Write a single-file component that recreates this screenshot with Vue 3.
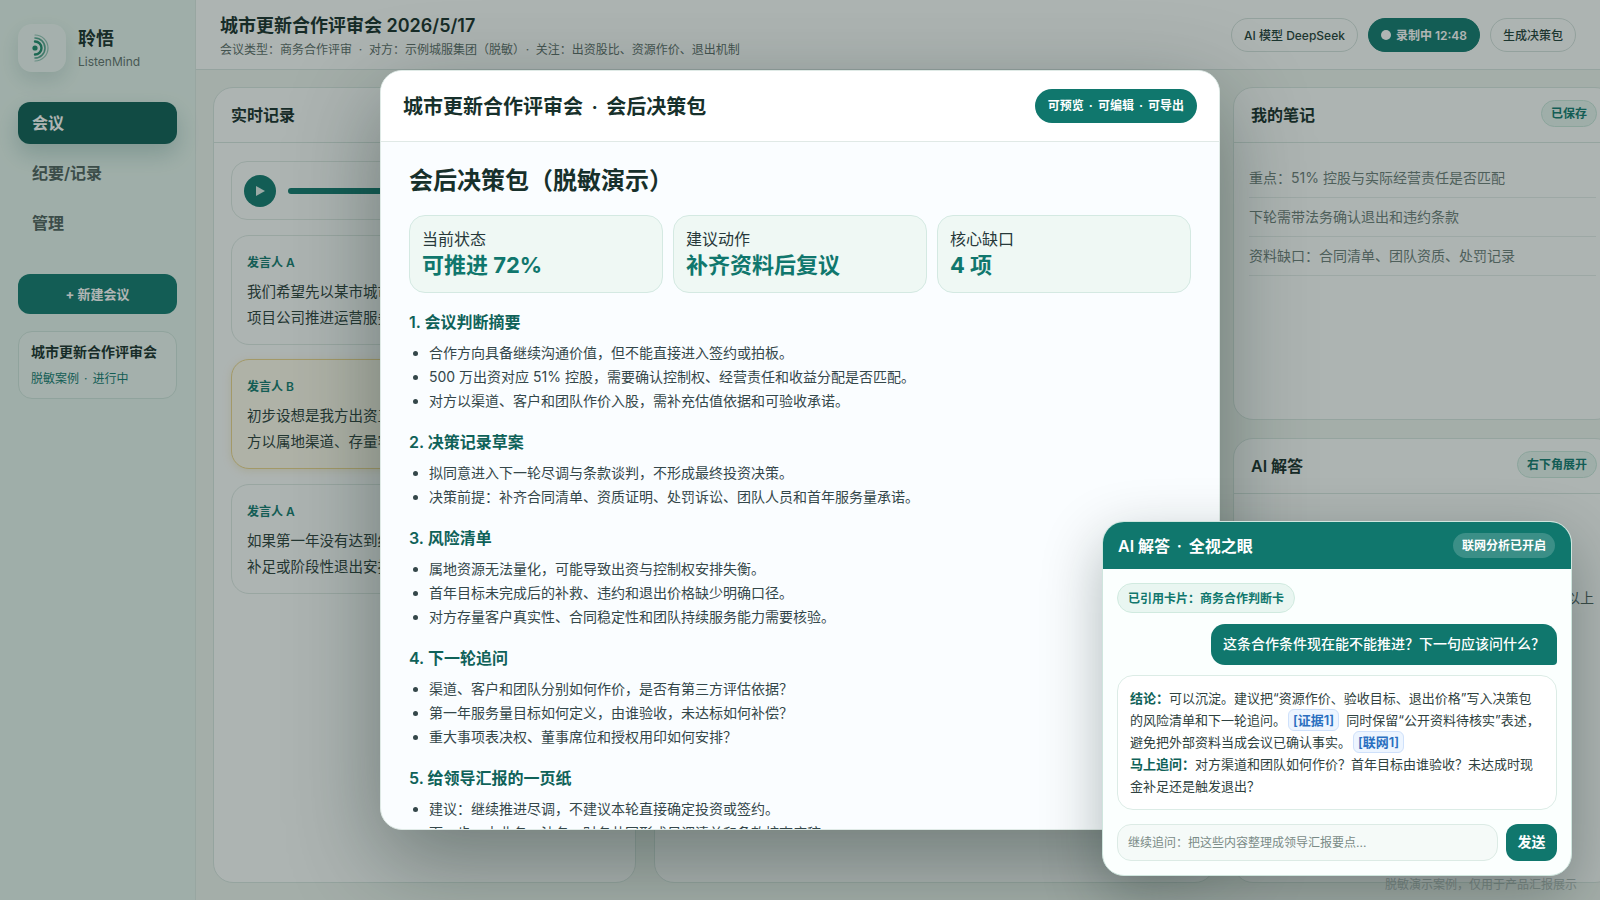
<template>
  <div class="app">
    <aside class="sidebar">
      <div class="brand">
        <div class="logo">
          <svg viewBox="0 0 48 48" width="48" height="48" fill="none" stroke-linecap="round">
            <circle cx="17" cy="24" r="2.6" fill="#1f8a6c" />
            <path d="M17 17.5A6.5 6.5 0 0 1 17 30.5" stroke="#1f8a6c" stroke-width="2.4" />
            <path d="M17 14A10 10 0 0 1 17 34" stroke="#1f8a6c" stroke-width="1.6" opacity="0.75" />
            <path d="M17 11A13 13 0 0 1 17 37" stroke="#1f8a6c" stroke-width="1.2" opacity="0.45" />
          </svg>
        </div>
        <div>
          <div class="brand-name">聆悟</div>
          <div class="brand-sub">ListenMind</div>
        </div>
      </div>
      <nav class="nav">
        <div v-for="item in navItems" :key="item" class="nav-item" :class="{ active: item === '会议' }">{{ item }}</div>
      </nav>
      <button class="new-btn">+ 新建会议</button>
      <div class="meeting-card">
        <div class="meeting-title">城市更新合作评审会</div>
        <div class="meeting-sub">脱敏案例<span class="sep">·</span>进行中</div>
      </div>
    </aside>

    <main class="main">
      <header class="topbar">
        <div class="top-text">
          <div class="page-title">城市更新合作评审会 2026/5/17</div>
          <div class="page-sub">会议类型：商务合作评审<span class="sep">·</span>对方：示例城服集团（脱敏）<span class="sep">·</span>关注：出资股比、资源作价、退出机制</div>
        </div>
        <div class="top-actions">
          <span class="pill">AI 模型 DeepSeek</span>
          <span class="pill recording"><i class="rec-dot"></i>录制中 12:48</span>
          <span class="pill">生成决策包</span>
        </div>
      </header>

      <div class="columns">
        <section class="panel">
          <div class="panel-head"><h3>实时记录</h3></div>
          <div class="panel-body">
            <div class="player">
              <span class="play">
                <svg viewBox="0 0 12 12" width="12" height="12"><path d="M2 1l9 5-9 5z" fill="#dfeeea" /></svg>
              </span>
              <span class="track"></span>
            </div>
            <div v-for="(line, i) in transcript" :key="i" class="line-card" :class="{ flagged: line.flagged }">
              <div class="speaker">{{ line.speaker }}</div>
              <p>{{ line.text }}</p>
            </div>
          </div>
        </section>

        <section class="panel">
          <div class="panel-head"><h3>会议要点</h3></div>
        </section>

        <div class="right-col">
          <section class="panel notes">
            <div class="panel-head"><h3>我的笔记</h3><span class="badge">已保存</span></div>
            <div class="notes-body">
              <div v-for="note in notes" :key="note" class="note">{{ note }}</div>
            </div>
          </section>
          <section class="panel answers">
            <div class="panel-head"><h3>AI 解答</h3><span class="badge">右下角展开</span></div>
            <div class="answers-body">
              <p>资源作价需要第三方依据。</p>
              <p>退出价格需要写明口径。</p>
              <p>首年服务量目标需要明确，建议先按约百分之八十以上</p>
            </div>
          </section>
        </div>
      </div>
    </main>

    <div class="footnote">脱敏演示案例，仅用于产品汇报展示</div>

    <div class="overlay">
      <div class="modal">
        <div class="modal-head">
          <h2>城市更新合作评审会<span class="sep">·</span>会后决策包</h2>
          <span class="modal-pill">可预览<span class="sep">·</span>可编辑<span class="sep">·</span>可导出</span>
        </div>
        <div class="modal-body">
          <h1>会后决策包（脱敏演示）</h1>
          <div class="stats">
            <div v-for="stat in stats" :key="stat.label" class="stat">
              <div class="stat-label">{{ stat.label }}</div>
              <div class="stat-value">{{ stat.value }}</div>
            </div>
          </div>
          <template v-for="sec in sections" :key="sec.title">
            <h4>{{ sec.title }}</h4>
            <ul>
              <li v-for="row in sec.rows" :key="row">{{ row }}</li>
            </ul>
          </template>
        </div>
      </div>
    </div>

    <div class="chat">
      <div class="chat-head">
        <span class="chat-title">AI 解答<span class="sep">·</span>全视之眼</span>
        <span class="chat-badge">联网分析已开启</span>
      </div>
      <div class="chat-body">
        <div class="cite">已引用卡片：商务合作判断卡</div>
        <div class="question">这条合作条件现在能不能推进？下一句应该问什么？</div>
        <div class="reply">
          <b>结论：</b>可以沉淀。建议把“资源作价、验收目标、退出价格”写入决策包的风险清单和下一轮追问。<span class="ref">[证据1]</span>同时保留“公开资料待核实”表述，避免把外部资料当成会议已确认事实。<span class="ref">[联网1]</span><br />
          <b>马上追问：</b>对方渠道和团队如何作价？首年目标由谁验收？未达成时现金补足还是触发退出？
        </div>
        <div class="ask">
          <input class="ask-input" placeholder="继续追问：把这些内容整理成领导汇报要点..." />
          <button class="send">发送</button>
        </div>
      </div>
    </div>
  </div>
</template>

<script setup>
const navItems = ['会议', '纪要/记录', '管理']

const transcript = [
  { speaker: '发言人 A', text: '我们希望先以某市城市更新片区作为首个试点，并成立项目公司推进运营服务。' },
  { speaker: '发言人 B', text: '初步设想是我方出资五百万元并持有五十一股权，由对方以属地渠道、存量客户和团队作价入股。', flagged: true },
  { speaker: '发言人 A', text: '如果第一年没有达到约定目标，需要讨论是否进行现金补足或阶段性退出安排。' },
]

const notes = [
  '重点：51% 控股与实际经营责任是否匹配',
  '下轮需带法务确认退出和违约条款',
  '资料缺口：合同清单、团队资质、处罚记录',
]

const stats = [
  { label: '当前状态', value: '可推进 72%' },
  { label: '建议动作', value: '补齐资料后复议' },
  { label: '核心缺口', value: '4 项' },
]

const sections = [
  {
    title: '1. 会议判断摘要',
    rows: [
      '合作方向具备继续沟通价值，但不能直接进入签约或拍板。',
      '500 万出资对应 51% 控股，需要确认控制权、经营责任和收益分配是否匹配。',
      '对方以渠道、客户和团队作价入股，需补充估值依据和可验收承诺。',
    ],
  },
  {
    title: '2. 决策记录草案',
    rows: [
      '拟同意进入下一轮尽调与条款谈判，不形成最终投资决策。',
      '决策前提：补齐合同清单、资质证明、处罚诉讼、团队人员和首年服务量承诺。',
    ],
  },
  {
    title: '3. 风险清单',
    rows: [
      '属地资源无法量化，可能导致出资与控制权安排失衡。',
      '首年目标未完成后的补救、违约和退出价格缺少明确口径。',
      '对方存量客户真实性、合同稳定性和团队持续服务能力需要核验。',
    ],
  },
  {
    title: '4. 下一轮追问',
    rows: [
      '渠道、客户和团队分别如何作价，是否有第三方评估依据？',
      '第一年服务量目标如何定义，由谁验收，未达标如何补偿？',
      '重大事项表决权、董事席位和授权用印如何安排？',
    ],
  },
  {
    title: '5. 给领导汇报的一页纸',
    rows: [
      '建议：继续推进尽调，不建议本轮直接确定投资或签约。',
      '下一步：由业务、法务、财务共同形成尽调清单和条款核查底稿。',
    ],
  },
]
</script>

<style scoped>
.app {
  display: flex;
  width: 1600px;
  height: 900px;
  position: relative;
  overflow: hidden;
  background: #edf4ef;
  color: #17302b;
  font-family: Inter, "Noto Sans CJK SC", sans-serif;
}

.sep {
  margin: 0 0.42em;
}

.sidebar {
  width: 196px;
  flex-shrink: 0;
  box-sizing: border-box;
  padding: 24px 18px;
  background: #e6f5ee;
  border-right: 1px solid #dbe8e2;
}

.brand {
  display: flex;
  align-items: center;
  gap: 12px;
}

.logo {
  width: 48px;
  height: 48px;
  border-radius: 14px;
  background: rgba(255, 255, 255, 0.35);
  box-shadow: 0 8px 20px rgba(15, 80, 70, 0.14);
}

.brand-name {
  font-size: 18px;
  font-weight: 700;
  line-height: 26px;
  padding-top: 1px;
}

.brand-sub {
  font-size: 12px;
  line-height: 18px;
  color: #61726d;
  margin-top: 1px;
}

.nav {
  display: flex;
  flex-direction: column;
  gap: 8px;
  margin-top: 30px;
}

.nav-item {
  height: 42px;
  line-height: 42px;
  padding-left: 14px;
  border-radius: 12px;
  font-size: 16px;
  font-weight: 600;
  color: #4f625d;
}

.nav-item.active {
  background: #0f5f56;
  color: #fff;
  box-shadow: 0 10px 22px rgba(15, 90, 80, 0.22);
}

.new-btn {
  display: block;
  width: 100%;
  height: 40px;
  margin-top: 30px;
  padding: 0 0 2px;
  border: none;
  border-radius: 12px;
  background: #127a6f;
  color: #fff;
  font-family: inherit;
  font-size: 13px;
  font-weight: 700;
}

.meeting-card {
  margin-top: 17px;
  padding: 8px 12px 9px;
  border: 1px solid #cfe4dc;
  border-radius: 14px;
  background: rgba(255, 255, 255, 0.3);
}

.meeting-title {
  font-size: 14px;
  font-weight: 600;
  line-height: 24px;
}

.meeting-sub {
  font-size: 12px;
  line-height: 20px;
  margin-top: 5px;
  color: #127a6f;
}

.main {
  flex: 1;
  min-width: 0;
}

.topbar {
  height: 70px;
  box-sizing: border-box;
  display: flex;
  justify-content: space-between;
  align-items: center;
  padding: 0 24px;
  background: #fbfdfc;
  border-bottom: 1px solid #d7e4df;
}

.top-text {
  padding-top: 3px;
}

.page-title {
  font-size: 18px;
  font-weight: 600;
  line-height: 26px;
}

.page-sub {
  font-size: 12px;
  line-height: 18px;
  margin-top: 2px;
  color: #5b6d68;
}

.page-sub .sep {
  margin: 0 0.56em;
}

.top-actions {
  display: flex;
  gap: 10px;
}

.pill {
  display: flex;
  align-items: center;
  height: 34px;
  box-sizing: border-box;
  padding: 0 12px;
  border: 1px solid #d3e1dc;
  border-radius: 17px;
  font-size: 12px;
  font-weight: 500;
  color: #1f3f38;
}

.recording {
  background: #127a6f;
  border-color: #127a6f;
  color: #fff;
  font-weight: 600;
}

.rec-dot {
  width: 10px;
  height: 10px;
  margin-right: 5px;
  border-radius: 50%;
  background: #fff;
}

.columns {
  display: grid;
  grid-template-columns: 423px 561px 382px;
  gap: 18px;
  padding: 17px;
  height: 830px;
  box-sizing: border-box;
  padding-bottom: 17px;
}

.panel {
  box-sizing: border-box;
  background: #fbfdfc;
  border: 1px solid #d7e5df;
  border-radius: 20px;
  overflow: hidden;
}

.panel-head {
  height: 55px;
  box-sizing: border-box;
  display: flex;
  justify-content: space-between;
  align-items: center;
  padding: 0 17px 3px;
  border-bottom: 1px solid #d7e5df;
}

.panel-head h3 {
  margin: 0;
  font-size: 16px;
  font-weight: 600;
}

.panel-body {
  padding: 18px 17px;
}

.player {
  display: flex;
  align-items: center;
  gap: 12px;
  height: 59px;
  box-sizing: border-box;
  padding: 0 12px;
  border: 1px solid #dce8e3;
  border-radius: 16px;
}

.play {
  display: flex;
  align-items: center;
  justify-content: center;
  width: 32px;
  height: 32px;
  border-radius: 50%;
  background: #127a6f;
}

.track {
  flex: 1;
  height: 6px;
  border-radius: 3px;
  background: #127a6f;
}

.line-card {
  margin-top: 14.5px;
  height: 110px;
  box-sizing: border-box;
  padding: 18px 15px 0;
  border: 1px solid #dce8e3;
  border-radius: 18px;
}

.line-card.flagged {
  background: #fdfbec;
  border-color: #ecd58c;
  box-shadow: 0 2px 8px rgba(220, 190, 100, 0.25);
}

.speaker {
  font-size: 12px;
  font-weight: 600;
  line-height: 18px;
  color: #127a6f;
}

.line-card p {
  margin: 7px 0 0;
  font-size: 14.5px;
  line-height: 26px;
  color: #2b403b;
}

.right-col {
  display: flex;
  flex-direction: column;
  gap: 18px;
  min-height: 0;
}

.notes {
  height: 333px;
  flex-shrink: 0;
}

.answers {
  flex: 1;
}

.badge {
  height: 27px;
  line-height: 25px;
  box-sizing: border-box;
  padding: 0 9px;
  border: 1px solid #c7e5da;
  border-radius: 14px;
  background: #e6f5ef;
  font-size: 12px;
  font-weight: 600;
  color: #127a6f;
}

.notes-body {
  padding: 16px 18px 0 15px;
}

.note {
  height: 39px;
  line-height: 37px;
  box-sizing: border-box;
  border-bottom: 1px solid #e3ece8;
  font-size: 14px;
  color: #6c7e79;
}

.answers-body {
  padding: 41px 15px 0 24px;
}

.answers-body p {
  margin: 0;
  font-size: 14px;
  line-height: 25px;
  white-space: nowrap;
  color: #4e615c;
}

.footnote {
  position: absolute;
  right: 23px;
  bottom: 6px;
  font-size: 12px;
  line-height: 18px;
  color: #b4c0bc;
}

.overlay {
  position: absolute;
  inset: 0;
  display: flex;
  align-items: center;
  justify-content: center;
  background: rgba(24, 38, 36, 0.34);
}

.modal {
  width: 840px;
  height: 760px;
  box-sizing: border-box;
  display: flex;
  flex-direction: column;
  border: 1px solid #dfeae6;
  border-radius: 22px;
  overflow: hidden;
  background: #fafdff;
  box-shadow: 0 30px 90px rgba(8, 28, 24, 0.38);
}

.modal-head {
  flex-shrink: 0;
  height: 71px;
  box-sizing: border-box;
  display: flex;
  justify-content: space-between;
  align-items: center;
  padding: 0 22px 2px;
  background: #fff;
  border-bottom: 1px solid #e0e9e6;
}

.modal-head h2 {
  margin: 0;
  font-size: 20px;
  font-weight: 600;
}

.modal-pill {
  height: 34px;
  line-height: 34px;
  margin-top: 2px;
  padding: 0 13px;
  border-radius: 17px;
  background: #10776d;
  font-size: 12px;
  font-weight: 700;
  color: #fff;
}

.modal-body {
  flex: 1;
  min-height: 0;
  overflow: hidden;
  padding: 21px 28px 0;
}

.modal-body h1 {
  margin: 0;
  font-size: 24px;
  font-weight: 600;
  line-height: 36px;
}

.stats {
  display: grid;
  grid-template-columns: repeat(3, 1fr);
  gap: 10px;
  margin-top: 16px;
}

.stat {
  height: 78px;
  box-sizing: border-box;
  padding: 10px 12px 0;
  border: 1px solid #d4e9e2;
  border-radius: 16px;
  background: #eff8f4;
}

.stat-label {
  font-size: 16px;
  line-height: 26px;
  color: #27393a;
}

.stat-value {
  font-size: 22px;
  font-weight: 700;
  line-height: 27px;
  color: #10776d;
}

.modal-body h4 {
  margin: 17px 0 7px;
  font-size: 16px;
  font-weight: 600;
  line-height: 24px;
  color: #0f6259;
}

.modal-body ul {
  margin: 0;
  padding-left: 20px;
}

.modal-body li {
  font-size: 14px;
  line-height: 24px;
  color: #34474a;
}

.chat {
  position: absolute;
  left: 1102px;
  top: 521px;
  width: 470px;
  height: 355px;
  box-sizing: border-box;
  border: 1px solid #cfe6de;
  border-radius: 22px;
  overflow: hidden;
  background: #fbfffe;
  box-shadow: 0 20px 60px rgba(8, 28, 24, 0.3);
}

.chat-head {
  height: 47px;
  box-sizing: border-box;
  display: flex;
  justify-content: space-between;
  align-items: center;
  padding: 0 16px 1px 15px;
  background: #10776d;
  color: #fff;
}

.chat-title {
  font-size: 16px;
  font-weight: 600;
}

.chat-badge {
  height: 25px;
  line-height: 25px;
  padding: 0 9px;
  border-radius: 13px;
  background: rgba(255, 255, 255, 0.18);
  font-size: 12px;
  font-weight: 700;
}

.chat-body {
  padding: 14px 14px 0;
}

.cite {
  display: inline-block;
  height: 30px;
  line-height: 29px;
  box-sizing: border-box;
  padding: 0 10px;
  border: 1px solid #d0eadf;
  border-radius: 15px;
  background: #e9f6f1;
  font-size: 12px;
  font-weight: 600;
  color: #10776d;
  vertical-align: top;
}

.question {
  width: fit-content;
  height: 41px;
  line-height: 40px;
  box-sizing: border-box;
  margin: 11px 0 0 auto;
  padding: 0 12px;
  border-radius: 14px 14px 4px 14px;
  background: #10776d;
  font-size: 14px;
  font-weight: 500;
  color: #fff;
}

.reply {
  height: 135px;
  box-sizing: border-box;
  margin-top: 10px;
  padding: 11px 12px 0;
  border: 1px solid #dcece6;
  border-radius: 16px;
  background: #fff;
  font-size: 13px;
  line-height: 22px;
  color: #2f4240;
}

.reply b {
  font-weight: 700;
  color: #0f6259;
}

.ref {
  display: inline-block;
  height: 22px;
  line-height: 20px;
  box-sizing: border-box;
  margin: 0 7px 0 2px;
  padding: 0 4px;
  border: 1px solid #cfe1fb;
  border-radius: 6px;
  background: #edf5ff;
  font-weight: 600;
  color: #2a6fc0;
}

.ask {
  display: flex;
  gap: 8px;
  margin-top: 14px;
}

.ask-input {
  flex: 1;
  min-width: 0;
  height: 37px;
  box-sizing: border-box;
  padding: 0 10px;
  border: 1px solid #dcebe5;
  border-radius: 14px;
  background: #f5faf8;
  font-family: inherit;
  font-size: 12px;
  outline: none;
}

.ask-input::placeholder {
  color: #7a8b87;
}

.send {
  width: 51px;
  height: 37px;
  padding: 0 0 3px;
  border: none;
  border-radius: 12px;
  background: #10776d;
  font-family: inherit;
  font-size: 14px;
  font-weight: 700;
  color: #fff;
}
</style>

<style>
html,
body {
  margin: 0;
  overflow: hidden;
}
</style>
